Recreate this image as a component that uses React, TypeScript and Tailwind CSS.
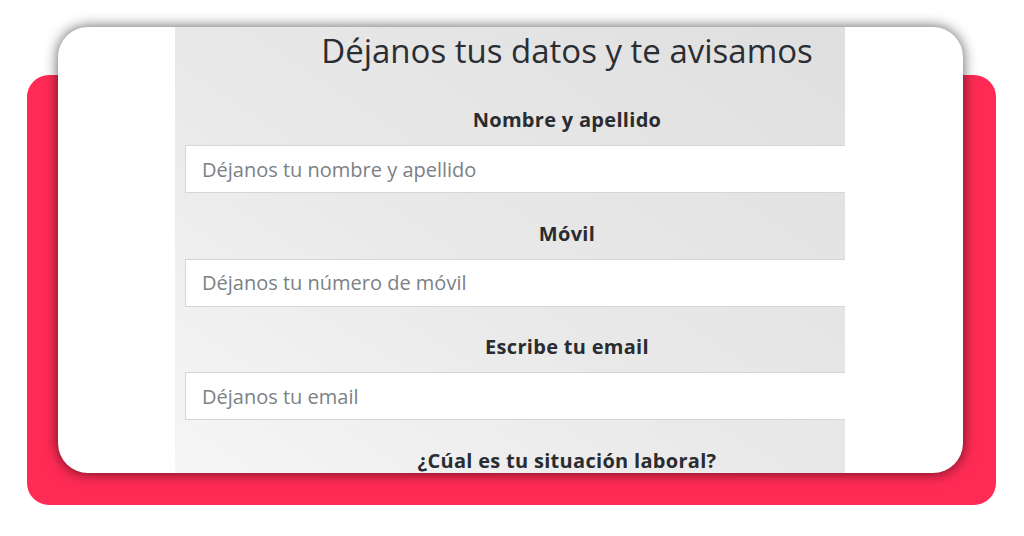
import React from "react";

const fields = [
  { label: "Nombre y apellido", placeholder: "Déjanos tu nombre y apellido" },
  { label: "Móvil", placeholder: "Déjanos tu número de móvil" },
  { label: "Escribe tu email", placeholder: "Déjanos tu email" },
];

export default function App() {
  return (
    <div
      className="w-[1024px] h-[536px] bg-white overflow-hidden grid"
      style={{ fontFamily: '"Open Sans", "Noto Sans", sans-serif' }}
    >
      <div className="[grid-area:1/1] ml-[27px] mt-[75px] w-[969px] h-[430px] rounded-[22px] bg-[#ff2b55]" />
      <div className="[grid-area:1/1] ml-[58px] mt-[27px] w-[905px] h-[446px] rounded-[30px] bg-white overflow-hidden shadow-[0_0_14px_rgba(0,0,0,0.65)] flex pl-[117px]">
        <div className="w-[670px] h-full overflow-hidden bg-[linear-gradient(to_top_right,#f6f6f6,#e9e9e9_45%,#dfdfdf)]">
          <div className="w-[784px] px-[10px] text-center">
            <h1 className="mt-[1px] text-[33px] leading-[45px] text-[#2a2e33] font-normal">
              Déjanos tus datos y te avisamos
            </h1>
            <div className="mt-[34px] flex flex-col">
              {fields.map((f) => (
                <div key={f.label} className="flex flex-col">
                  <label className="text-[20px] leading-[25px] font-bold tracking-[0.3px] text-[#2a2c2f]">
                    {f.label}
                  </label>
                  <input
                    className="mt-[13px] mb-[27.5px] h-[48px] w-full bg-white border border-[#d3d7db] pl-[16px] text-[20px] text-[#333] placeholder:text-[#7c8186] outline-none"
                    style={{ fontFamily: '"Open Sans", "Noto Sans", sans-serif' }}
                    placeholder={f.placeholder}
                  />
                </div>
              ))}
              <label className="text-[20px] leading-[25px] font-bold tracking-[0.3px] text-[#2a2c2f]">
                ¿Cúal es tu situación laboral?
              </label>
            </div>
          </div>
        </div>
      </div>
    </div>
  );
}
